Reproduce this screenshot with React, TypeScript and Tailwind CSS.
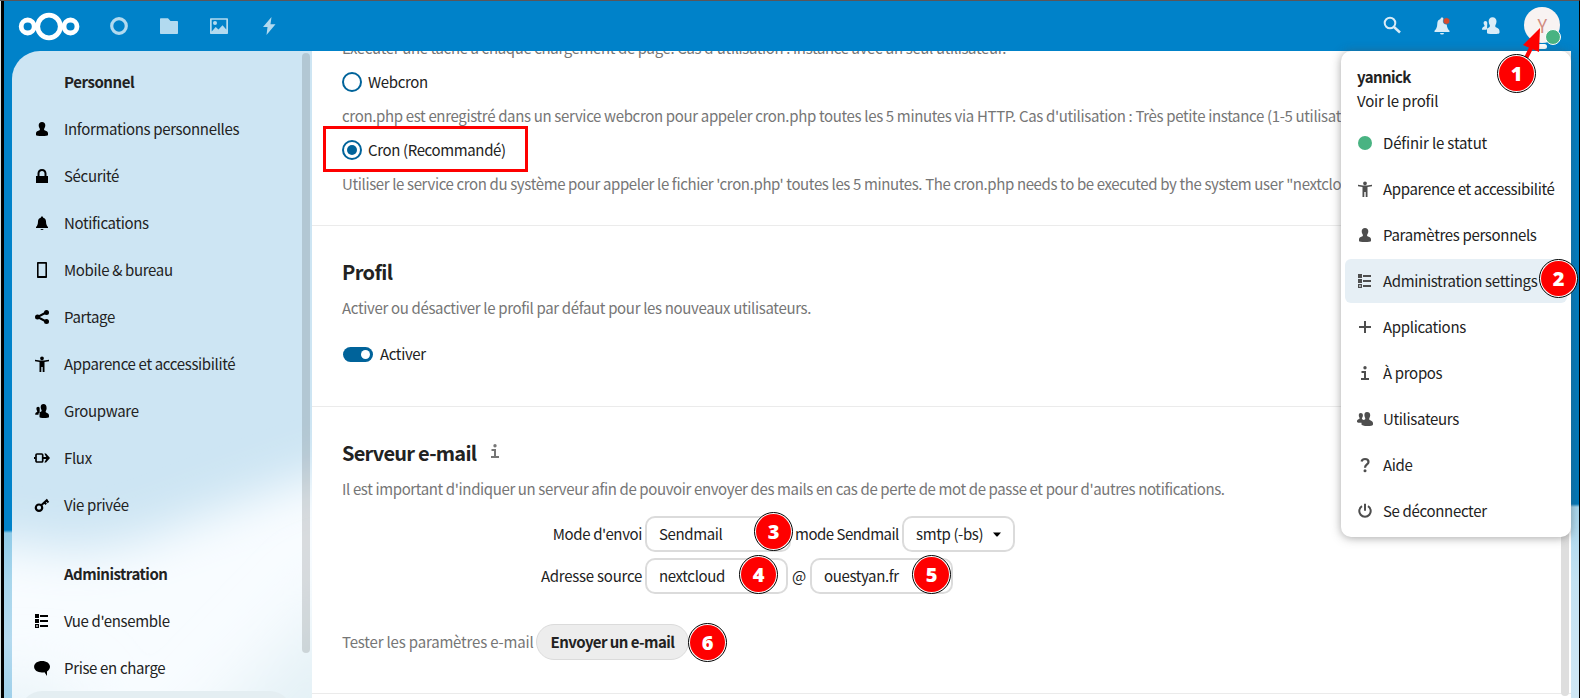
import type { ReactNode } from "react";

type IconName =
  | "user" | "lock" | "bell" | "phone" | "share" | "access" | "group" | "flow" | "key"
  | "list" | "comment" | "plus" | "info" | "users" | "help" | "power";

const shapes: Record<IconName, ReactNode> = {
  user: <path d="M8 1C5.900 1 4.700 2.300 4.700 4.200c0 1.600.6 2.400 1 3.200.3.700.3 1.600-.2 1.900C4 10 2 10.400 2 12.300V14c0 .7 2.500 1 6 1s6-.3 6-1v-1.700c0-1.900-2-2.300-3.500-3-.5-.3-.5-1.200-.2-1.900.4-.8 1-1.600 1-3.200C11.300 2.300 10.100 1 8 1z" />,
  lock: <path d="M8 1C5.200 1 3.500 3 3.500 5.500V8H2v7h12V8h-1.500V5.500C12.500 3 10.800 1 8 1zm0 2c1.500 0 2.500 1 2.500 2.500V8h-5V5.500C5.500 4 6.500 3 8 3z" />,
  bell: <path d="M8 1.500c-.8 0-1.200.5-1.200 1.200C5 3.200 4 4.600 4 6.500 4 9.500 3 11 2 12v1h12v-1c-1-1-2-2.500-2-5.500 0-1.900-1-3.300-2.800-3.800 0-.7-.4-1.200-1.200-1.200zM6.500 14a1.500 1 0 0 0 3 0z" />,
  phone: <path fillRule="evenodd" d="M4 0c-.6 0-1 .4-1 1v14c0 .6.4 1 1 1h8c.6 0 1-.4 1-1V1c0-.6-.4-1-1-1zm.6 1.700h6.800v12.300H4.600z" />,
  share: <><path d="M13 3 3.500 8 13 13" fill="none" stroke="currentColor" strokeWidth="2" /><circle cx="12.500" cy="3.500" r="2.500" /><circle cx="3.500" cy="8" r="2.500" /><circle cx="12.500" cy="12.500" r="2.500" /></>,
  access: <path d="M8 .4a1.900 1.900 0 1 1 0 3.800 1.900 1.900 0 0 1 0-3.800zM1 3.700l5 .7h4l5-.7v1.500l-4.500.9V16H8.700v-5H7.300v5H5.500V6.100L1 5.200z" />,
  group: <path d="M9.500 1C7.700 1 6.700 2.200 6.700 4c0 1.500.5 2.200.8 3 .3.700.2 1.300-.3 1.600-1.300.6-2.700 1-2.700 2.700v.5H1.200c0-1.600.3-2.100 1.700-2.700.4-.2.500-.7.200-1.200C2.600 7 2.400 6.500 2.400 5.500c0-1 .7-1.700 1.700-1.700 1.100 0 1.600.7 1.600 1.700v2.300l-.2 4 0 2.200c0 .6 2 1 4.500 1s5-.3 5-1v-1.600c0-1.900-1.700-2.200-2.900-2.800-.5-.3-.6-.9-.3-1.600.4-.8.800-1.500.8-3C12.600 2.200 11.500 1 9.500 1z" />,
  flow: <><rect x="2" y="4" width="6.700" height="8" rx="1" fill="none" stroke="currentColor" strokeWidth="1.700" /><path d="M0 7h1.500v2H0zM8 7h5v2H8zM10.300 3.500 12 3.500 16 8l-4 4.500-1.700 0L12.800 8z" /></>,
  key: <><circle cx="5" cy="10.700" r="3.200" fill="none" stroke="currentColor" strokeWidth="2.200" /><path d="M7 8.500 13.500 2.500M10.500 5.500l1.700 1.800M12.500 3.500l2 2" fill="none" stroke="currentColor" strokeWidth="2" /></>,
  list: <path fillRule="evenodd" d="M1 1h4v4H1zM6 2h8v2H6zM1 6h4v4H1zM6 7h8v2H6zM1 11h4v4H1zm1.200 1.200v1.600h1.600v-1.600zM6 12h8v2H6z" />,
  comment: <path d="M8 1C3.500 1 .1 3.300.1 6.800s3.400 5.700 7.900 5.700c.9 0 1.700-.1 2.500-.2L13 16v-4.600c1.900-1.100 3-2.700 3-4.600C16 3.300 12.500 1 8 1z" />,
  plus: <path d="M7 2h2v5h5v2H9v5H7V9H2V7h5z" />,
  info: <path d="M8 1a1.700 1.700 0 1 1 0 3.400A1.700 1.700 0 0 1 8 1zM4.500 6H9v7h3v2H4v-2h3V8H4.500z" />,
  users: <path d="M10 1C8.200 1 7.400 2.200 7.400 4c0 1.500.5 2.200.8 3 .2.700.1 1.200-.3 1.500L6.600 9c-.7-.4-1.400-.7-1.600-1-.3-.5 0-1 .3-1.500.4-.7.600-1.100.6-2.200 0-1.500-.9-2.300-2.100-2.300C2.500 2 1.800 2.800 1.800 4.300c0 1.100.3 1.500.6 2.200.2.500.4 1 0 1.300C1.200 8.500 0 8.900 0 10.300v.6c0 .5 2 .9 4.500.9V13.500c0 .9 2.500 1.500 5.800 1.500S16 14.500 16 13.500v-1.300c0-1.800-1.800-2.400-3.300-3.200-.5-.3-.6-1.200-.3-2 .4-.8.800-1.500.8-3 0-1.800-1.200-3-3.200-3z" />,
  help: <><path d="M4.500 4.500C5 3 6.300 2 8 2c2 0 3.500 1.100 3.500 2.900C11.500 7.500 8 7.300 8 10.700" fill="none" stroke="currentColor" strokeWidth="2.200" /><circle cx="8" cy="13.700" r="1.500" /></>,
  power: <path d="M5 3.200A5.700 5.700 0 1 0 11 3.200M8 .8v7" fill="none" stroke="currentColor" strokeWidth="2" />,
};

function Icon({ name, className = "" }: { name: IconName; className?: string }) {
  return (
    <svg viewBox="0 0 16 16" className={`size-4 shrink-0 ${className}`} fill="currentColor">
      {shapes[name]}
    </svg>
  );
}

const personal: [IconName, string][] = [
  ["user", "Informations personnelles"],
  ["lock", "Sécurité"],
  ["bell", "Notifications"],
  ["phone", "Mobile & bureau"],
  ["share", "Partage"],
  ["access", "Apparence et accessibilité"],
  ["group", "Groupware"],
  ["flow", "Flux"],
  ["key", "Vie privée"],
];

const admin: [IconName, string][] = [
  ["list", "Vue d'ensemble"],
  ["comment", "Prise en charge"],
];

const menu: [IconName, string][] = [
  ["access", "Apparence et accessibilité"],
  ["user", "Paramètres personnels"],
  ["list", "Administration settings"],
  ["plus", "Applications"],
  ["info", "À propos"],
  ["users", "Utilisateurs"],
  ["help", "Aide"],
  ["power", "Se déconnecter"],
];

function NavItem({ icon, label }: { icon: IconName; label: string }) {
  return (
    <li className="flex h-[47px] items-center gap-[14px] pl-[22px]">
      <Icon name={icon} className="text-black" />
      <span className="pt-px tracking-[-0.34px]">{label}</span>
    </li>
  );
}

function Badge({ n, className }: { n: number; className: string }) {
  return (
    <div className={`absolute z-30 flex size-[39px] items-center justify-center rounded-full border-[1.5px] border-black bg-white p-px ${className}`}>
      <div className="flex size-full items-center justify-center rounded-full bg-[#fe0000] font-['Open_Sans'] text-[20px] leading-none font-extrabold text-white">
        {n}
      </div>
    </div>
  );
}

function Header() {
  return (
    <header className="flex h-[50px] shrink-0 items-center bg-[#0082c9] pr-[19px] pl-[14px] text-white">
      <svg width="62" height="30" viewBox="0 0 62 30" fill="none" stroke="white" strokeWidth="4.800">
        <circle cx="31" cy="15.500" r="11.300" />
        <circle cx="9.700" cy="15.500" r="6.500" />
        <circle cx="52.500" cy="15.500" r="6.500" />
      </svg>
      <div className="ml-[30px] flex items-center gap-8 text-[#b2daef]">
        <svg width="18" height="18" viewBox="0 0 18 18" fill="none" stroke="currentColor" strokeWidth="3.200"><circle cx="9" cy="9" r="7.300" /></svg>
        <svg width="18" height="18" viewBox="0 0 18 18" fill="currentColor"><path d="M1 1.300h7L10.500 4H17c.6 0 1 .4 1 1v11c0 .6-.4 1-1 1H1c-.6 0-1-.4-1-1V2.300c0-.6.400-1 1-1z" /></svg>
        <svg width="18" height="18" viewBox="0 0 18 18" fill="currentColor"><path fillRule="evenodd" d="M1 1.300h16c.6 0 1 .4 1 1V16c0 .6-.4 1-1 1H1c-.6 0-1-.4-1-1V2.300c0-.6.400-1 1-1zm.7 1.500v11.700l4-4.500 2.800 2.500 4-4.200 3.800 4.200V2.800z" /><circle cx="5" cy="6" r="2" /></svg>
        <svg width="18" height="18" viewBox="0 0 18 18" fill="currentColor"><path d="M11.500 0 3 10h4.500L6.500 18 15.500 7.200h-5z" /></svg>
      </div>
      <div className="ml-auto flex items-center text-[#d9ecf7]">
        <svg width="18" height="18" viewBox="0 0 18 18" fill="none" stroke="currentColor" strokeWidth="2" className="translate-x-px -translate-y-px"><circle cx="7" cy="7" r="5.300" /><path d="m11 11 6 5.500" strokeWidth="2.500" /></svg>
        <svg width="18" height="18" viewBox="0 0 18 18" fill="currentColor" className="ml-[34px]"><path d="M8 .5c-1 0-1.500.6-1.500 1.500C4.400 2.600 3.300 4.200 3.300 6.500c0 4-1.500 6-2.800 7.300v1.200h15v-1.200c-1.300-1.300-2.800-3.300-2.800-7.300 0-2.300-1.100-3.900-3.200-4.500 0-.9-.5-1.500-1.500-1.500zM6 16a2 1.600 0 0 0 4 0z" /><circle cx="12.500" cy="4" r="3.300" fill="#d8492a" stroke="#0082c9" strokeWidth=".6" /></svg>
        <svg width="20" height="18" viewBox="0 0 20 18" fill="currentColor" className="ml-[29px]"><path d="M11.500.3C9 .3 7.700 2 7.700 4.300c0 2 .7 3 1.100 4 .2.800.1 1.500-.5 1.900-1.200.6-2.500 1.100-2.800 2.500H1c0-1.800.6-2.400 2.100-3.100.6-.3.600-.9.200-1.500C2.800 7.400 2.600 6.900 2.600 6c0-1.300.7-2 1.800-2s1.900.7 1.900 2L6 12.700v3c0 1 2.300 1.400 6 1.400s6.500-.4 6.500-1.400v-1.800c0-2.300-2.200-2.900-3.700-3.700-.6-.4-.7-1.100-.4-1.900.4-1 1.100-2 1.100-4C15.500 2 14 .3 11.500.3z" /></svg>
        <div className="relative ml-[23px] flex size-9 -translate-y-px items-center justify-center rounded-full bg-[#f8f3f2] text-[18px] font-normal text-[#d18b80]">
          Y
          <span className="absolute top-[22px] left-[21px] size-4 rounded-full border-[1.500px] border-white bg-[#49b382]" />
          <span className="absolute top-[37px] left-[13px] h-[5px] w-[10px] rounded-full bg-white" />
        </div>
      </div>
    </header>
  );
}

function Sidebar() {
  return (
    <nav className="relative w-[300px] shrink-0 overflow-hidden rounded-tl-[28px] bg-[#cde5f3]">
      <svg className="absolute inset-0 size-full" viewBox="0 0 300 647" preserveAspectRatio="none">
        <defs>
          <filter id="soft" x="-50%" y="-50%" width="200%" height="200%"><feGaussianBlur stdDeviation="24" /></filter>
          <filter id="softer" x="-50%" y="-50%" width="200%" height="200%"><feGaussianBlur stdDeviation="35" /></filter>
        </defs>
        <path d="M-120 480 0 492 70 500 130 488 190 465 300 425 460 380V800H-120z" fill="#f8fcff" filter="url(#soft)" />
        <path d="M80 800 340 530 440 800zM-60 640H60V760H-60z" fill="#e4f1f6" filter="url(#softer)" />
      </svg>
      <div className="relative pt-[7px]">
        <h2 className="flex h-[47px] items-center pt-px pl-[52px] font-bold tracking-[-0.45px]">Personnel</h2>
        <ul>{personal.map(([i, l]) => <NavItem key={l} icon={i} label={l} />)}</ul>
        <h2 className="mt-[22px] flex h-[47px] items-center pt-px pl-[52px] font-bold tracking-[-0.5px]">Administration</h2>
        <ul>{admin.map(([i, l]) => <NavItem key={l} icon={i} label={l} />)}</ul>
        <div className="ml-2 h-11 w-[272px] rounded-full bg-[#e4eef2]" />
      </div>
      <div className="absolute top-[2px] right-[2px] h-[600px] w-2 rounded-full bg-black/13" />
    </nav>
  );
}

function Radio({ label, checked }: { label: string; checked?: boolean }) {
  return (
    <label className="flex h-[34px] shrink-0 items-center gap-[6px]">
      <span className="flex size-5 items-center justify-center rounded-full border-2 border-[#00639a]">
        {checked && <span className="size-[10px] rounded-full bg-[#00639a]" />}
      </span>
      {label}
    </label>
  );
}

const hint = "flex h-[34px] shrink-0 items-center text-[#767676]";
const field = "flex h-9 shrink-0 items-center rounded-[10px] border-2 border-[#dbdbdb] bg-white pl-3";

function Content() {
  return (
    <main className="relative min-w-0 flex-1 overflow-hidden bg-white whitespace-nowrap">
      <section className="flex h-[175px] flex-col justify-end border-b border-[#ebebeb] pb-[24px] pl-[30px]">
        <p className={hint}>Exécuter une tâche à chaque chargement de page. Cas d'utilisation : instance avec un seul utilisateur.</p>
        <Radio label="Webcron" />
        <p className={`${hint} tracking-[-0.34px]`}>cron.php est enregistré dans un service webcron pour appeler cron.php toutes les 5 minutes via HTTP. Cas d'utilisation : Très petite instance (1-5 utilisat</p>
        <Radio label="Cron (Recommandé)" checked />
        <p className={hint}>Utiliser le service cron du système pour appeler le fichier 'cron.php' toutes les 5 minutes. The cron.php needs to be executed by the system user "nextclo</p>
      </section>
      <section className="h-[181px] border-b border-[#ebebeb] pt-[29px] pl-[30px]">
        <h2 className="flex h-[34px] items-center text-[20px] font-bold tracking-[-0.6px]">Profil</h2>
        <p className={`${hint} mt-[2px] tracking-[-0.34px]`}>Activer ou désactiver le profil par défaut pour les nouveaux utilisateurs.</p>
        <label className="mt-[12px] flex h-[34px] items-center gap-[7px] pl-px">
          <span className="flex h-[15px] w-[30px] items-center justify-end rounded-full bg-[#00639a] pr-[3px]">
            <span className="size-[9px] rounded-full bg-white" />
          </span>
          Activer
        </label>
      </section>
      <section className="h-[287px] border-b border-[#ebebeb] pt-[29px] pl-[30px]">
        <h2 className="flex h-[34px] items-center gap-[11px] text-[20px] font-bold tracking-[-0.75px]">
          Serveur e-mail <Icon name="info" className="mb-1 text-[#767676]" />
        </h2>
        <p className={`${hint} mt-[2px]`}>Il est important d'indiquer un serveur afin de pouvoir envoyer des mails en cas de perte de mot de passe et pour d'autres notifications.</p>
        <div className="mt-[10px] flex items-center">
          <span className="w-[300px] shrink-0 text-right">Mode d'envoi</span>
          <span className={`${field} ml-[3px] w-[146px]`}>Sendmail</span>
          <span className="ml-[4px] w-[107px] shrink-0 tracking-[-0.5px]">mode Sendmail</span>
          <span className={`${field} w-[113px] justify-between pr-3`}>
            smtp (-bs)
            <svg width="8" height="5" viewBox="0 0 8 5"><path d="M0 .5h8L4.500 4.500h-1z" /></svg>
          </span>
        </div>
        <div className="mt-[6px] flex items-center">
          <span className="w-[300px] shrink-0 text-right tracking-[-0.25px]">Adresse source</span>
          <span className={`${field} ml-[3px] w-[143px]`}>nextcloud</span>
          <span className="w-[22px] text-center">@</span>
          <span className={`${field} w-[143px]`}>ouestyan.fr</span>
        </div>
        <div className="mt-[30px] flex items-center">
          <span className="w-[194px] tracking-[-0.18px] text-[#767676]">Tester les paramètres e-mail</span>
          <span className="flex h-9 w-[153px] items-center justify-center rounded-full border border-[#dbdbdb] bg-[#ededed] font-bold tracking-[-0.55px]">Envoyer un e-mail</span>
        </div>
      </section>
      <div className="absolute top-[2px] right-[2px] h-[643px] w-2 rounded-full bg-[#dedede]" />
    </main>
  );
}

function UserMenu() {
  return (
    <div className="absolute top-[50px] left-[1341px] z-20 h-[486px] w-[230px] rounded-[10px] bg-white px-1 pt-[14px] tracking-[-0.33px] whitespace-nowrap shadow-[0_1px_10px_rgba(77,77,77,0.5)]">
      <div className="mb-[8px] pl-3">
        <p className="flex h-6 items-center pt-px font-bold tracking-[-0.6px]">yannick</p>
        <p className="flex h-6 items-center pt-px tracking-[-0.2px]">Voir le profil</p>
      </div>
      <div className="flex flex-col gap-[2px]">
        <div className="flex h-11 items-center gap-[10px] pl-3 tracking-[-0.15px]">
          <span className="ml-px mr-px size-[14px] rounded-full bg-[#49b382]" />
          Définir le statut
        </div>
        {menu.map(([i, l]) => (
          <div key={l} className={`flex h-11 items-center gap-[10px] rounded-md pl-3 ${i === "list" ? "bg-[#e6eff5]" : ""}`}>
            <Icon name={i} className="text-[#4e4e4e]" />
            <span className="pt-px">{l}</span>
          </div>
        ))}
      </div>
    </div>
  );
}

export default function App() {
  return (
    <div className="relative flex h-[698px] w-[1580px] flex-col overflow-hidden border-t border-r border-t-[#5b5558] border-r-black bg-[#0082c9] font-['Noto_Sans_CJK_SC','Noto_Sans',sans-serif] text-[15px] tracking-[-0.37px] text-[#222222]">
      <div className="flex min-h-0 flex-1 border-l border-[#d8e4e4]">
        <div className="w-[3px] shrink-0 bg-black" />
        <div className="flex min-w-0 flex-1 flex-col bg-[linear-gradient(to_bottom,#0082c9_0,#0082c9_529px,#8fcbe8_532px,#a8d6ec_580px,#b4daef_640px,#9fd0ea_698px),linear-gradient(to_bottom,#0082c9_0,#0077b8_503px,#a8d6ec_506px,#c3e1f1_580px,#cfe7f5_698px)] bg-[size:50%_100%,100%_100%] bg-no-repeat">
          <Header />
          <div className="flex min-h-0 flex-1 pr-2 pl-2">
            <Sidebar />
            <Content />
          </div>
        </div>
      </div>
      <UserMenu />
      <div className="absolute top-[125px] left-[323px] h-[46px] w-[205px] border-[3px] border-[#fe0000]" />
      <svg className="absolute top-[25px] left-[1515px] z-30" width="30" height="35"><path d="M10 34 20 14" stroke="#fe0000" strokeWidth="4" /><path d="M25 2 8 19 24 26z" fill="#fe0000" /></svg>
      <Badge n={1} className="top-[53px] left-[1497px]" />
      <Badge n={2} className="top-[258px] left-[1539px]" />
      <Badge n={3} className="top-[511px] left-[754px]" />
      <Badge n={4} className="top-[554px] left-[739px]" />
      <Badge n={5} className="top-[554px] left-[912px]" />
      <Badge n={6} className="top-[622px] left-[688px]" />
    </div>
  );
}
